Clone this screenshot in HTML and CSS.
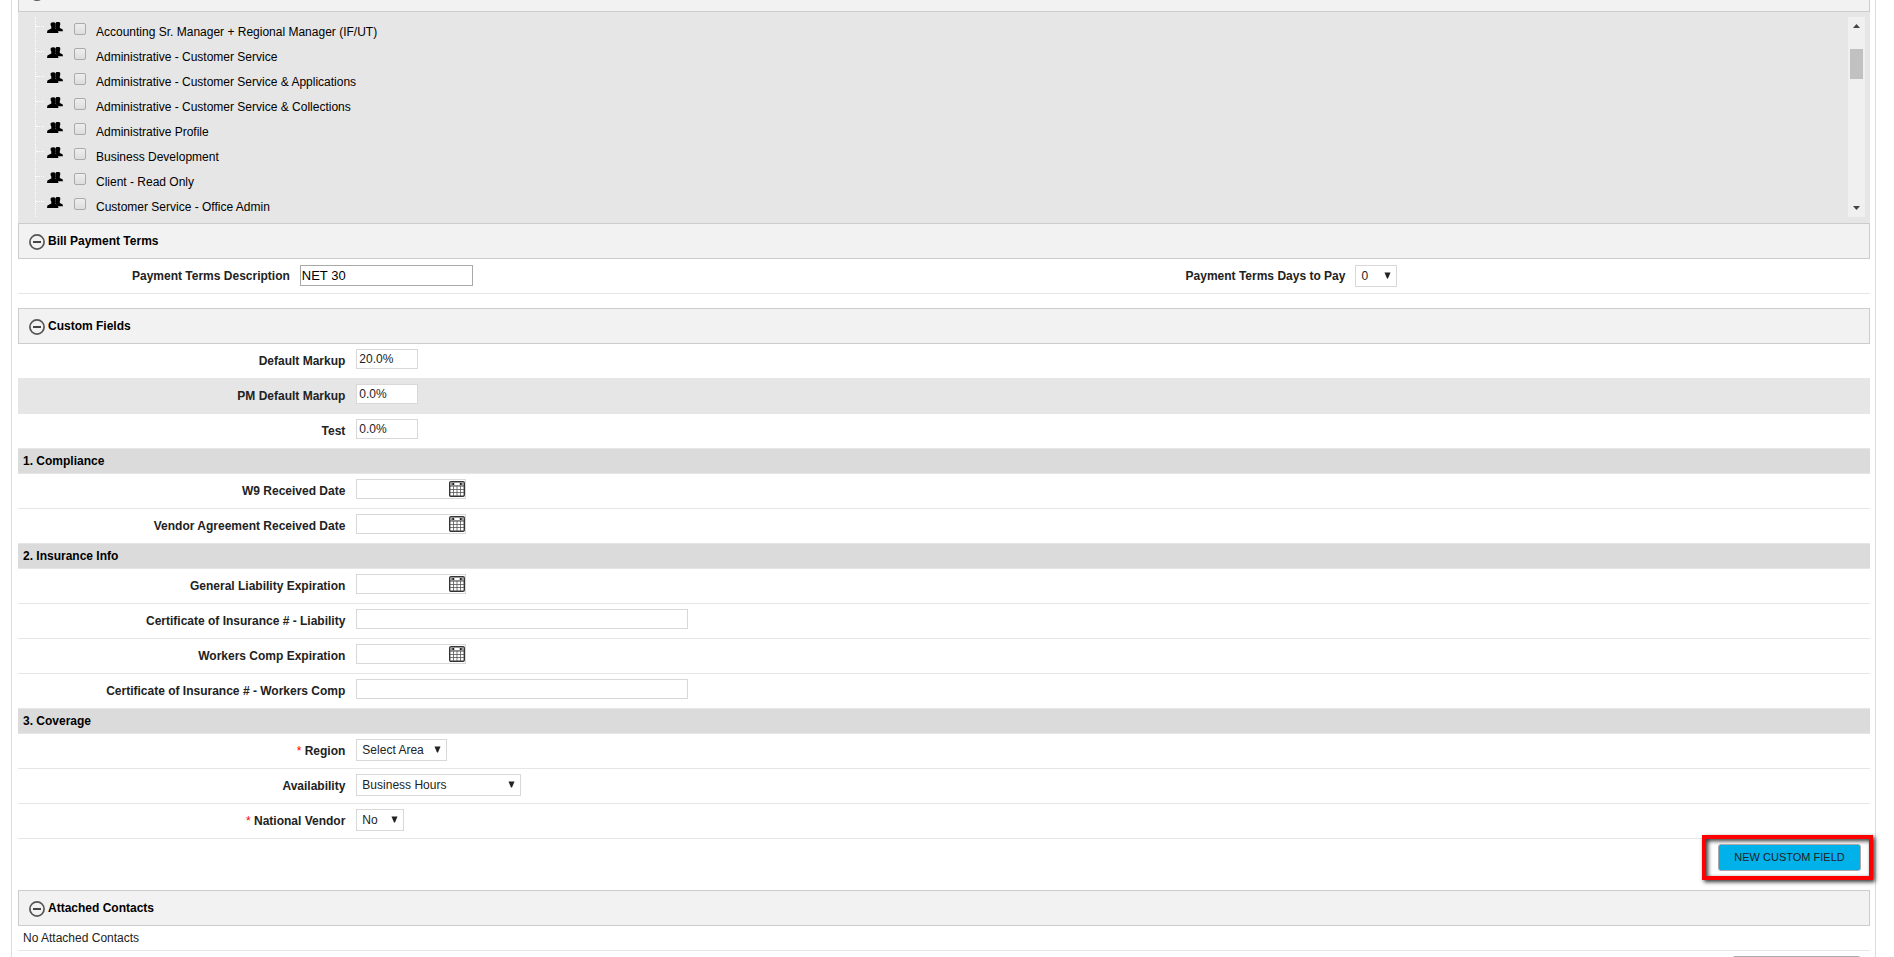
FILE: index.html
```html
<!DOCTYPE html>
<html lang="en">
<head>
<meta charset="utf-8">
<title>Vendor Details</title>
<link rel="stylesheet" href="styles.css">
</head>
<body>
<svg class="defs" aria-hidden="true">
  <symbol id="minus" viewBox="0 0 16 16"><circle cx="8" cy="8" r="7.100" fill="none" stroke="#555" stroke-width="1.700"/><path d="M4 8h8" stroke="#444" stroke-width="2"/></symbol>
  <symbol id="people" viewBox="0 0 16 11"><path d="M9 .3C10-.1 12-.1 13 .5c.5 1 .3 2.600-.2 3.500V6l2.700 1.200L16 9.300h-5L8 6z"/><path d="M3.800 1C5 0 7.500 0 8.500 1c.4 1.400.2 2.700-.5 3.500v2l2.600 1.200.9 3.300H0l.4-2.600 3.900-1.900v-2C3.600 3.500 3.400 2.200 3.800 1z"/></symbol>
  <symbol id="calendar" viewBox="0 0 16 16"><rect x=".7" y=".7" width="14.600" height="14.600" rx="1.300" fill="#fff" stroke="#333" stroke-width="1.400"/><path d="M1.400 1.400h13.200v3H1.400z" fill="#999"/><path d="M5.500 2h5v2h-5z" fill="#fff"/><path d="M3.500 2h1.500v2H3.500zM11 2h1.500v2H11z" fill="#222"/><path d="M1 5h14" stroke="#444" stroke-width="1"/><path d="M1 8.500h14M1 11.500h14M4.500 5v10M8 5v10M11.500 5v10" stroke="#555" stroke-width=".8"/></symbol>
  <symbol id="down" viewBox="0 0 7 7"><path d="M.5.5h6L4 6.500H3z" fill="#222"/></symbol>
</svg>
<main class="panel">
  <header class="section-head section-cut"><svg class="toggle"><use href="#minus"/></svg></header>
  <section class="tree">
    <ul class="tree-list">
      <li><svg class="people"><use href="#people"/></svg><input type="checkbox" id="p1"><label for="p1">Accounting Sr. Manager + Regional Manager (IF/UT)</label></li>
      <li><svg class="people"><use href="#people"/></svg><input type="checkbox" id="p2"><label for="p2">Administrative - Customer Service</label></li>
      <li><svg class="people"><use href="#people"/></svg><input type="checkbox" id="p3"><label for="p3">Administrative - Customer Service &amp; Applications</label></li>
      <li><svg class="people"><use href="#people"/></svg><input type="checkbox" id="p4"><label for="p4">Administrative - Customer Service &amp; Collections</label></li>
      <li><svg class="people"><use href="#people"/></svg><input type="checkbox" id="p5"><label for="p5">Administrative Profile</label></li>
      <li><svg class="people"><use href="#people"/></svg><input type="checkbox" id="p6"><label for="p6">Business Development</label></li>
      <li><svg class="people"><use href="#people"/></svg><input type="checkbox" id="p7"><label for="p7">Client - Read Only</label></li>
      <li><svg class="people"><use href="#people"/></svg><input type="checkbox" id="p8"><label for="p8">Customer Service - Office Admin</label></li>
    </ul>
    <div class="scrollbar" aria-hidden="true">
      <svg class="scroll-arrow" viewBox="0 0 7 4"><path d="M0 4h7L3.500 0z"/></svg>
      <span class="thumb"></span>
      <svg class="scroll-arrow scroll-end" viewBox="0 0 7 4"><path d="M0 0h7L3.500 4z"/></svg>
    </div>
  </section>

  <header class="section-head"><svg class="toggle"><use href="#minus"/></svg><h2>Bill Payment Terms</h2></header>
  <div class="row terms">
    <label class="label" for="desc">Payment Terms Description</label>
    <div class="field"><input class="text dark" id="desc" type="text" value="NET 30"></div>
    <label class="label" for="days">Payment Terms Days to Pay</label>
    <div class="field"><span class="select days"><select id="days"><option>0</option></select><svg><use href="#down"/></svg></span></div>
  </div>

  <header class="section-head spaced"><svg class="toggle"><use href="#minus"/></svg><h2>Custom Fields</h2></header>
  <div class="row"><label class="label" for="markup">Default Markup</label><div class="field"><input class="text short" id="markup" type="text" value="20.0%"></div></div>
  <div class="row shaded"><label class="label" for="pm">PM Default Markup</label><div class="field"><input class="text short" id="pm" type="text" value="0.0%"></div></div>
  <div class="row"><label class="label" for="test">Test</label><div class="field"><input class="text short" id="test" type="text" value="0.0%"></div></div>
  <h3 class="group">1. Compliance</h3>
  <div class="row"><label class="label" for="w9">W9 Received Date</label><div class="field"><span class="date"><input class="text" id="w9" type="text"><button type="button" aria-label="Pick date"><svg><use href="#calendar"/></svg></button></span></div></div>
  <div class="row"><label class="label" for="agreement">Vendor Agreement Received Date</label><div class="field"><span class="date"><input class="text" id="agreement" type="text"><button type="button" aria-label="Pick date"><svg><use href="#calendar"/></svg></button></span></div></div>
  <h3 class="group">2. Insurance Info</h3>
  <div class="row"><label class="label" for="liability">General Liability Expiration</label><div class="field"><span class="date"><input class="text" id="liability" type="text"><button type="button" aria-label="Pick date"><svg><use href="#calendar"/></svg></button></span></div></div>
  <div class="row"><label class="label" for="cert1">Certificate of Insurance # - Liability</label><div class="field"><input class="text long" id="cert1" type="text"></div></div>
  <div class="row"><label class="label" for="workers">Workers Comp Expiration</label><div class="field"><span class="date"><input class="text" id="workers" type="text"><button type="button" aria-label="Pick date"><svg><use href="#calendar"/></svg></button></span></div></div>
  <div class="row"><label class="label" for="cert2">Certificate of Insurance # - Workers Comp</label><div class="field"><input class="text long" id="cert2" type="text"></div></div>
  <h3 class="group">3. Coverage</h3>
  <div class="row"><label class="label" for="region"><span class="required">*</span> Region</label><div class="field"><span class="select region"><select id="region"><option>Select Area</option></select><svg><use href="#down"/></svg></span></div></div>
  <div class="row"><label class="label" for="avail">Availability</label><div class="field"><span class="select avail"><select id="avail"><option>Business Hours</option></select><svg><use href="#down"/></svg></span></div></div>
  <div class="row"><label class="label" for="national"><span class="required">*</span> National Vendor</label><div class="field"><span class="select national"><select id="national"><option>No</option></select><svg><use href="#down"/></svg></span></div></div>
  <div class="actions"><div class="highlight"><button class="primary" type="button">NEW CUSTOM FIELD</button></div></div>

  <header class="section-head"><svg class="toggle"><use href="#minus"/></svg><h2>Attached Contacts</h2></header>
  <p class="empty">No Attached Contacts</p>
  <div class="next-actions"><button class="secondary" type="button" aria-label="Attach contact"></button></div>
</main>
</body>
</html>
```
FILE: styles.css
```css
* { box-sizing: border-box; }
html { height: 100%; overflow: hidden; }
body {
  margin: 0;
  height: 100%;
  overflow: hidden;
  background: #fff;
  color: #222;
  font: 12px/16px "Liberation Sans", Arial, sans-serif;
}
input, select, button { font: inherit; color: inherit; margin: 0; }
.defs { display: none; }

.panel {
  margin: 0 18px 0 11px;
  padding: 0 5px 0 6px;
  min-height: 100%;
  border: solid #dcdcdc;
  border-width: 0 1px;
}

.section-head {
  display: flex;
  gap: 3px;
  height: 36px;
  padding: 9px 10px;
  background: #f2f2f2;
  border: 1px solid #ccc;
  color: #000;
}
.section-cut { height: 12px; padding-top: 0; border-top: 0; overflow: hidden; }
.section-cut .toggle { margin-top: -15px; }
.section-head.spaced { margin-top: 14px; }
.section-head h2 { margin: 0; font-size: 12px; line-height: 16px; }
.toggle { flex: none; width: 16px; height: 16px; margin-top: 1px; }

.tree {
  display: flex;
  justify-content: space-between;
  padding: 5px 5px 6px 17px;
  background: #e6e6e6;
}
.tree-list {
  list-style: none;
  margin: 0;
  padding: 0;
  border-left: 1px dotted #fff;
}
.tree-list li { display: flex; align-items: flex-start; height: 25px; color: #000; }
.tree-list li::before { content: ""; width: 8px; margin: 9px 3px 0 0; border-top: 1px dotted #fff; }
.people { width: 16px; height: 11px; margin-top: 5px; }
.tree-list input {
  appearance: none;
  width: 12px;
  height: 12px;
  margin: 6px 10px 0 11px;
  border: 1px solid #aaa;
  border-radius: 2px;
  background: linear-gradient(#eee, #ddd);
}
.tree-list label { padding-top: 7px; }

.scrollbar {
  display: flex;
  flex-direction: column;
  align-items: center;
  width: 17px;
  padding: 7px 0;
  background: #f0f0f0;
}
.scroll-arrow { width: 7px; height: 4px; fill: #444; }
.scroll-end { margin-top: auto; }
.thumb { width: 13px; height: 30px; margin-top: 21px; background: #c1c1c1; }

.row {
  display: grid;
  grid-template-columns: 18% 1fr;
  height: 35px;
  border-bottom: 1px solid #e6e6e6;
}
.row.terms { grid-template-columns: 15% 42% 15% 28%; }
.row.shaded { background: #e6e6e6; }
.label { padding: 9px 6px 0 0; text-align: right; font-weight: bold; }
.required { color: #f00; font-weight: normal; }
.field { display: flex; align-items: flex-start; padding: 5px 0 0 5px; }
.terms .field { padding: 6px 0 0 4px; }

.text {
  height: 20px;
  padding: 0 2px 1px;
  border: 1px solid #d8d8d8;
  background: #fff;
}
.text.short { width: 62px; }
.text.long { width: 332px; }
.text.dark { width: 173px; height: 21px; padding: 0 1px 1px; border-color: #a9a9a9; color: #000; font-size: 13px; }

.date { position: relative; width: 110px; height: 20px; }
.date .text { width: 100%; padding-right: 18px; }
.date button {
  position: absolute;
  top: 2px;
  right: 1px;
  width: 16px;
  height: 16px;
  padding: 0;
  border: 0;
  background: none;
}
.date svg { display: block; width: 16px; height: 16px; }

.select { position: relative; height: 22px; }
.select select {
  appearance: none;
  width: 100%;
  height: 22px;
  padding: 0 16px 1px 5px;
  border: 1px solid #d8d8d8;
  border-radius: 0;
  background: #fff;
}
.select svg { position: absolute; top: 7px; right: 6px; width: 7px; height: 7px; pointer-events: none; }
.select.days { width: 42px; }
.select.region { width: 91px; }
.select.avail { width: 165px; }
.select.national { width: 48px; }

.group {
  margin: 0;
  height: 25px;
  padding: 4px 5px;
  font-size: 12px;
  line-height: 16px;
  color: #000;
  background: #dbdbdb;
  border-bottom: 1px solid #e6e6e6;
}

.actions { display: flex; justify-content: flex-end; height: 51px; }
.highlight {
  position: relative;
  height: 45px;
  margin: -4px -3px 0 0;
  padding: 5px 8px 0 12px;
  border: 4px solid #f00;
  box-shadow: 2px 2px 4px #333, inset 2px 2px 4px #333;
}
.primary {
  display: block;
  width: 143px;
  height: 27px;
  padding: 0 0 2px;
  border: 1px solid #aaa;
  border-radius: 3px;
  background: #00b1ea;
  font-size: 11px;
}
.empty { margin: 0; height: 25px; padding: 4px 5px; border-bottom: 1px solid #e6e6e6; }
.next-actions { display: flex; justify-content: flex-end; padding: 5px 9px 0 0; }
.secondary { width: 129px; height: 27px; border: 1px solid #aaa; border-radius: 3px; background: #ccc; }
```
